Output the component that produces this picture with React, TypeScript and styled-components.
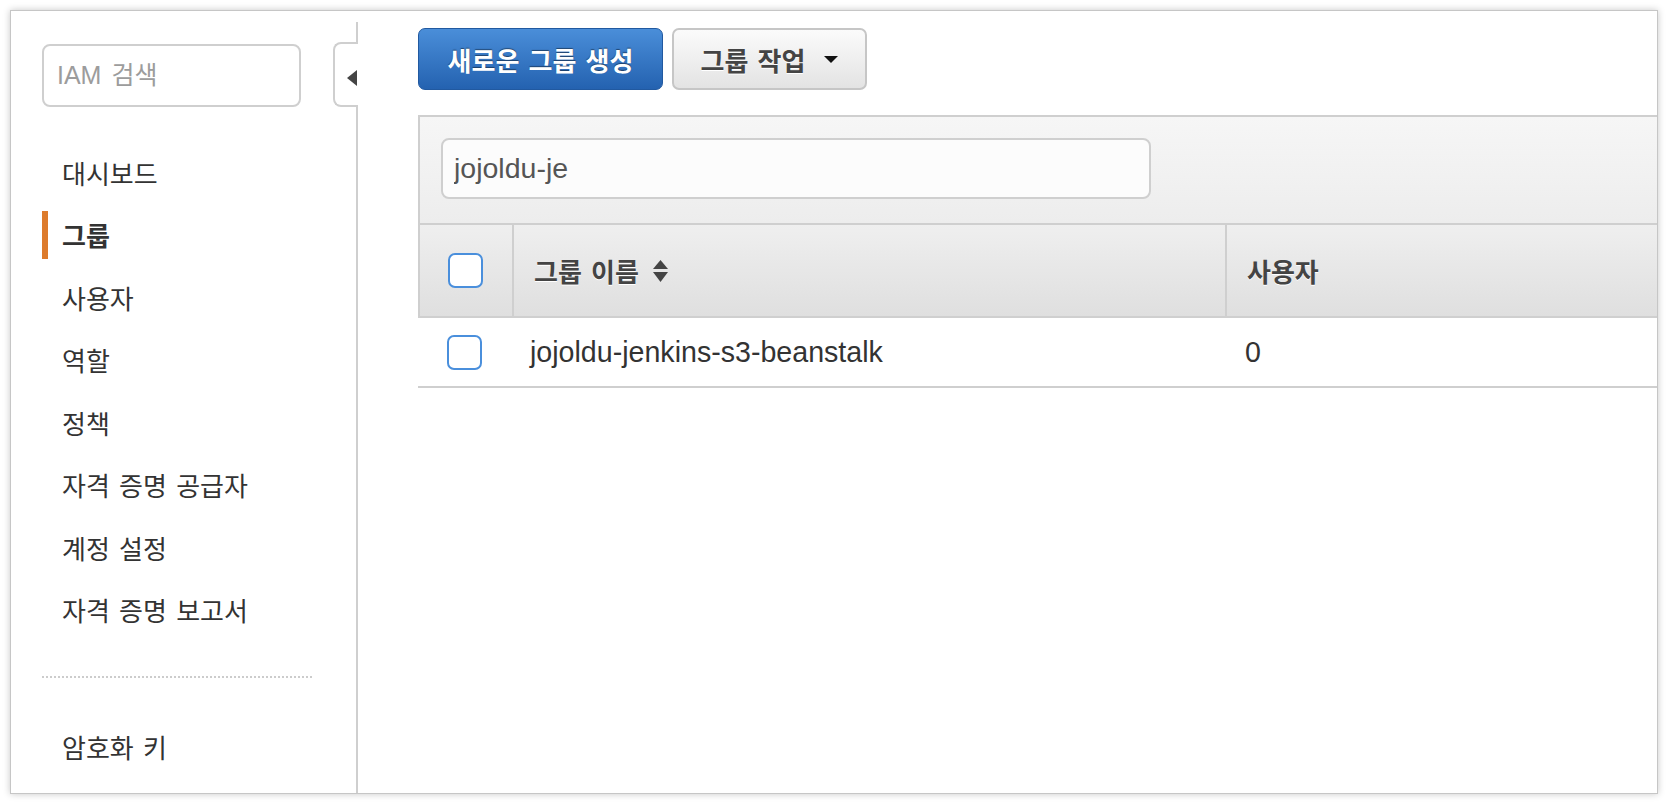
import React from "react";
import styled, { createGlobalStyle } from "styled-components";

const GlobalStyle = createGlobalStyle`
  html, body { margin: 0; padding: 0; background: #fff; }
  body {
    font-family: "Liberation Sans", "Noto Sans CJK KR", sans-serif;
    color: #444;
  }
  * { box-sizing: border-box; }
`;

const Page = styled.div`
  width: 1668px;
  height: 804px;
  padding: 10px;
`;

const Window = styled.div`
  display: flex;
  width: 1648px;
  height: 784px;
  border: 1px solid #c6c6c6;
  box-shadow: 0 0 7px rgba(0, 0, 0, 0.22);
  background: #fff;
  overflow: hidden;
`;

/* ---------- Sidebar ---------- */

const Sidebar = styled.aside`
  flex: none;
  width: 347px;
  padding-top: 11px;
  display: flex;
`;

const SidebarInner = styled.div`
  position: relative;
  flex: 1;
  display: flex;
  flex-direction: column;
  padding: 22px 0 0 31px;
  border-right: 2px solid #cfcfcf;
`;

const SearchInput = styled.input`
  width: 259px;
  height: 63px;
  border: 2px solid #cfcfcf;
  border-radius: 8px;
  padding: 0 0 0 13px;
  font-family: "Liberation Sans", "Noto Sans CJK KR", sans-serif;
  font-size: 25px;
  word-spacing: 3px;
  color: #444;
  background: #fff;
  outline: none;
  &::placeholder { color: #9c9c9c; }
`;

const CollapseTab = styled.div`
  position: absolute;
  top: 20px;
  right: -2px;
  width: 25px;
  height: 65px;
  display: flex;
  align-items: center;
  padding: 6px 0 0 12px;
  background: #fff;
  border: 2px solid #cfcfcf;
  border-right: none;
  border-radius: 8px 0 0 8px;
`;

const LeftCaret = styled.span`
  width: 0;
  height: 0;
  border-top: 8px solid transparent;
  border-bottom: 8px solid transparent;
  border-right: 10px solid #444;
`;

const Nav = styled.nav`
  display: flex;
  flex-direction: column;
  margin-top: 34px;
`;

const NavItem = styled.div<{ $active?: boolean; $gap?: number }>`
  display: flex;
  align-items: center;
  height: 62.5px;
  margin-top: ${(p) => p.$gap ?? 0}px;
  font-size: 26px;
  word-spacing: 2px;
  color: #333;
  font-weight: ${(p) => (p.$active ? 700 : 400)};
`;

const Indicator = styled.span<{ $active?: boolean }>`
  flex: none;
  width: 6px;
  height: 48px;
  margin-right: 14px;
  background: ${(p) => (p.$active ? "#dd7b2c" : "transparent")};
`;

const NavDivider = styled.div`
  width: 270px;
  margin-top: 35px;
  border-top: 2px dotted #cccccc;
`;

/* ---------- Main ---------- */

const Main = styled.main`
  flex: 1;
  display: flex;
  flex-direction: column;
  padding: 17px 0 0 60px;
`;

const Toolbar = styled.div`
  display: flex;
  gap: 9px;
`;

const PrimaryButton = styled.button`
  width: 245px;
  height: 62px;
  border: 1px solid #2159a0;
  border-radius: 7px;
  background: linear-gradient(#4a8ed9, #2462b0);
  color: #fff;
  font-family: "Liberation Sans", "Noto Sans CJK KR", sans-serif;
  font-size: 26px;
  font-weight: 700;
  word-spacing: 2px;
  text-shadow: 0 -1px 1px rgba(0, 0, 0, 0.45);
  padding: 0;
`;

const SecondaryButton = styled.button`
  width: 195px;
  height: 62px;
  display: flex;
  align-items: center;
  justify-content: center;
  gap: 19px;
  border: 2px solid #c6c6c6;
  border-radius: 7px;
  background: linear-gradient(#fbfbfb, #e3e3e3);
  color: #444;
  font-family: "Liberation Sans", "Noto Sans CJK KR", sans-serif;
  font-size: 26px;
  font-weight: 700;
  word-spacing: 2px;
  text-shadow: 0 1px 0 #fff;
  padding: 0;
`;

const DownCaret = styled.span`
  width: 0;
  height: 0;
  border-left: 7px solid transparent;
  border-right: 7px solid transparent;
  border-top: 7px solid #111;
`;

const FilterPanel = styled.div`
  margin-top: 25px;
  padding: 21px 0 24px 21px;
  border-top: 2px solid #cfcfcf;
  border-left: 2px solid #cfcfcf;
  background: linear-gradient(#f6f6f6, #ededed);
`;

const FilterInput = styled.input`
  display: block;
  width: 710px;
  height: 61px;
  padding: 0 0 0 11px;
  border: 2px solid #cfcfcf;
  border-radius: 8px;
  background: #fcfcfc;
  font-family: "Liberation Sans", "Noto Sans CJK KR", sans-serif;
  font-size: 28.5px;
  color: #555;
  outline: none;
`;

const HeaderRow = styled.div`
  display: grid;
  grid-template-columns: 94px 713px 1fr;
  height: 95px;
  border-top: 2px solid #cfcfcf;
  border-bottom: 2px solid #cfcfcf;
  border-left: 2px solid #cfcfcf;
  background: linear-gradient(#efefef, #dfdfdf);
`;

const BodyRow = styled.div`
  display: grid;
  grid-template-columns: 96px 713px 1fr;
  height: 70px;
  border-bottom: 2px solid #cfcfcf;
  background: #fff;
`;

const CheckCell = styled.div<{ $divider?: boolean; $pad: number }>`
  display: flex;
  align-items: center;
  padding-left: ${(p) => p.$pad}px;
  border-right: ${(p) => (p.$divider ? "2px solid #cfcfcf" : "none")};
`;

const Checkbox = styled.span`
  width: 35px;
  height: 35px;
  border: 2px solid #4a8fdc;
  border-radius: 7px;
  background: #fff;
`;

const HeadCell = styled.div<{ $divider?: boolean }>`
  display: flex;
  align-items: center;
  padding-left: 20px;
  font-size: 26px;
  font-weight: 700;
  word-spacing: 2px;
  color: #444;
  text-shadow: 0 1px 0 #fff;
  border-right: ${(p) => (p.$divider ? "2px solid #cfcfcf" : "none")};
`;

const SortIcon = styled.svg`
  margin-left: 14px;
  flex: none;
`;

const DataCell = styled.div<{ $pad: number }>`
  display: flex;
  align-items: center;
  padding-left: ${(p) => p.$pad}px;
  font-size: 28.6px;
  color: #333;
`;

const navItems = [
  "대시보드",
  "그룹",
  "사용자",
  "역할",
  "정책",
  "자격 증명 공급자",
  "계정 설정",
  "자격 증명 보고서",
];

export default function App() {
  return (
    <>
      <GlobalStyle />
      <Page>
        <Window>
          <Sidebar>
            <SidebarInner>
              <SearchInput placeholder="IAM 검색" />
              <CollapseTab>
                <LeftCaret />
              </CollapseTab>
              <Nav>
                {navItems.map((label) => (
                  <NavItem key={label} $active={label === "그룹"}>
                    <Indicator $active={label === "그룹"} />
                    {label}
                  </NavItem>
                ))}
                <NavDivider />
                <NavItem $gap={36.75}>
                  <Indicator />
                  암호화 키
                </NavItem>
              </Nav>
            </SidebarInner>
          </Sidebar>
          <Main>
            <Toolbar>
              <PrimaryButton>새로운 그룹 생성</PrimaryButton>
              <SecondaryButton>
                그룹 작업
                <DownCaret />
              </SecondaryButton>
            </Toolbar>
            <FilterPanel>
              <FilterInput defaultValue="jojoldu-je" />
            </FilterPanel>
            <HeaderRow>
              <CheckCell $divider $pad={28}>
                <Checkbox />
              </CheckCell>
              <HeadCell $divider>
                그룹 이름
                <SortIcon width="15" height="22" viewBox="0 0 15 22">
                  <path d="M0 9 L7.5 0 L15 9 Z" fill="#444" />
                  <path d="M0 12 L15 12 L7.5 22 Z" fill="#444" />
                </SortIcon>
              </HeadCell>
              <HeadCell>사용자</HeadCell>
            </HeaderRow>
            <BodyRow>
              <CheckCell $pad={29}>
                <Checkbox />
              </CheckCell>
              <DataCell $pad={16}>jojoldu-jenkins-s3-beanstalk</DataCell>
              <DataCell $pad={18}>0</DataCell>
            </BodyRow>
          </Main>
        </Window>
      </Page>
    </>
  );
}
